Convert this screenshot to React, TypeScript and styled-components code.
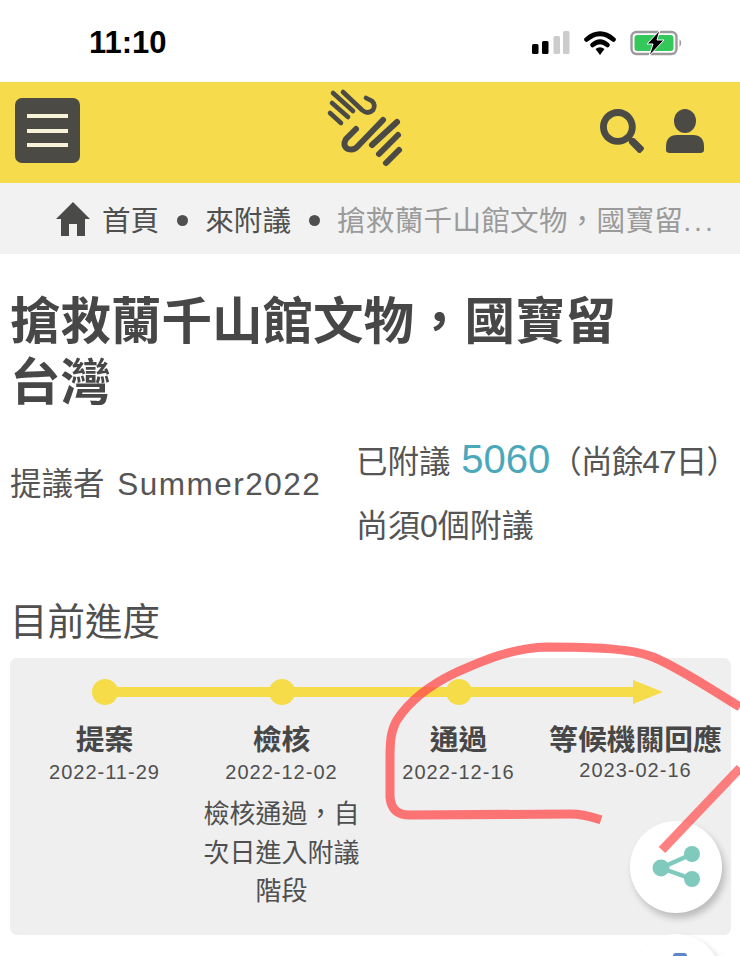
import React from 'react';
import styled, { createGlobalStyle } from 'styled-components';
import { FaSearch } from 'react-icons/fa';

const GlobalStyle = createGlobalStyle`
    html, body {
        margin: 0;
        padding: 0;
        background: #fff;
    }
    body {
        font-family: "Liberation Sans", "Noto Sans CJK TC", sans-serif;
        color: #4a4a48;
    }
`;

const Page = styled.div`
    position: relative;
    width: 740px;
    height: 956px;
    overflow: hidden;
    background: #fff;
`;

const StatusBar = styled.div`
    display: flex;
    align-items: center;
    justify-content: space-between;
    height: 82px;
    padding: 4px 56px 0 89px;
    box-sizing: border-box;
`;

const Clock = styled.span`
    font-family: "Liberation Sans", sans-serif;
    font-size: 31px;
    font-weight: 700;
    color: #000;
`;

const StatusIcons = styled.div`
    display: flex;
    align-items: center;
    gap: 14px;
`;

const Header = styled.header`
    display: flex;
    align-items: center;
    justify-content: space-between;
    box-sizing: border-box;
    height: 101px;
    padding: 0 35px 4px 15px;
    background: #f6dc4c;
`;

const MenuButton = styled.button`
    display: flex;
    flex-direction: column;
    justify-content: center;
    gap: 10.5px;
    width: 65px;
    height: 65px;
    padding: 0 12px;
    border: 0;
    border-radius: 7px;
    background: #4b4a45;
`;

const MenuLine = styled.span`
    display: block;
    height: 4px;
    background: #f8f3d8;
`;

const Logo = styled.svg`
    width: 110px;
    height: 100px;
    margin: 0 0 4px 50px;
`;

const HeaderActions = styled.div`
    display: flex;
    align-items: center;
    gap: 21px;
    color: #4b4a45;
    font-size: 44px;
`;

const Breadcrumb = styled.nav`
    display: flex;
    align-items: center;
    height: 71px;
    padding: 0 0 0 55px;
    background: #f2f2f2;
    font-size: 28.6px;
    white-space: nowrap;
    color: #4f4f4f;
`;

const HomeIcon = styled.svg`
    width: 36px;
    height: 36px;
    margin-right: 11px;
`;

const Dot = styled.span`
    width: 11px;
    height: 11px;
    margin: 3px 17.5px 0;
    border-radius: 50%;
    background: #4f4f4f;
`;

const CurrentCrumb = styled.span`
    letter-spacing: 0.25px;
    color: #9a9a9a;
`;

const CrumbDots = styled.span`
    letter-spacing: 3px;
`;

const Main = styled.main`
    padding: 37px 9px 0 10px;
`;

const Title = styled.h1`
    width: 620px;
    margin: 0;
    font-size: 50.5px;
    line-height: 61px;
    font-weight: 700;
    color: #474747;
`;

const Meta = styled.div`
    display: flex;
    margin: 14px 0 0;
    font-size: 31.5px;
    color: #555;
`;

const Proposer = styled.div`
    flex: none;
    width: 346px;
    margin-top: 31px;
`;

const ProposerName = styled.span`
    margin-left: 4px;
    letter-spacing: 1.5px;
`;

const Signed = styled.div`
    flex: none;
    line-height: 64px;
    white-space: nowrap;
`;

const SignCount = styled.span`
    margin-left: 2px;
    font-size: 40px;
    color: #4ba8bb;
`;

const SignDays = styled.span`
    letter-spacing: -0.8px;
`;

const SignNeed = styled.div`
    font-size: 32px;
`;

const SectionTitle = styled.h2`
    margin: 39px 0 11px;
    font-size: 37.5px;
    line-height: 50px;
    font-weight: 400;
    color: #4f4f4f;
`;

const Panel = styled.section`
    position: relative;
    height: 277px;
    border-radius: 7px;
    background: #efefef;
    padding-left: 6px;
`;

const Steps = styled.ol`
    display: grid;
    grid-template-columns: repeat(4, 177px);
    margin: 0;
    padding: 0;
    list-style: none;
`;

const Step = styled.li`
    position: relative;
    display: flex;
    flex-direction: column;
    align-items: center;
    padding-top: 64px;
    text-align: center;
`;

/* 時間軸的線跟點蓋在每一欄上方 */
const StepDot = styled.span`
    position: absolute;
    left: 76px;
    top: 21px;
    z-index: 1;
    width: 26px;
    height: 26px;
    border-radius: 50%;
    background: #f5dc48;
`;

const StepLine = styled.span`
    position: absolute;
    left: 88px;
    top: 29px;
    width: 177px;
    height: 10px;
    background: #f5dc48;
`;

const StepArrow = styled.span`
    position: absolute;
    left: 88px;
    top: 29px;
    width: 0;
    height: 10px;
    background: #f5dc48;
    &::after {
        content: '';
        position: absolute;
        left: -2px;
        top: -7px;
        border-left: 30px solid #f5dc48;
        border-top: 12px solid transparent;
        border-bottom: 12px solid transparent;
    }
`;

const StepName = styled.div`
    font-size: 28.8px;
    line-height: 36px;
    font-weight: 700;
    white-space: nowrap;
    color: #474747;
`;

const StepDate = styled.div<{ $raised?: boolean }>`
    margin-top: ${(p) => (p.$raised ? '-3px' : '-1px')};
    font-size: 20px;
    line-height: 30px;
    letter-spacing: 1px;
    color: #4f4f4f;
`;

const StepNote = styled.div`
    width: 160px;
    margin-top: 8px;
    font-size: 26px;
    line-height: 38.5px;
    color: #4f4f4f;
`;

const Fab = styled.button<{ $top: number }>`
    position: absolute;
    left: 630px;
    top: ${(p) => p.$top}px;
    display: flex;
    align-items: center;
    justify-content: center;
    box-sizing: border-box;
    width: 92px;
    height: 92px;
    padding: 0;
    border: 0;
    border-radius: 50%;
    background: #fff;
    box-shadow: 3px 5px 7px rgba(0, 0, 0, 0.22);
`;

const SecondFabMark = styled.span`
    position: absolute;
    left: 43px;
    top: 19px;
    width: 14px;
    height: 30px;
    border-radius: 3px;
    background: #5b86c9;
`;

const Scribble = styled.svg`
    position: absolute;
    left: 0;
    top: 0;
    width: 740px;
    height: 956px;
    z-index: 3;
    pointer-events: none;
`;

const steps = [
    { name: '提案', date: '2022-11-29' },
    { name: '檢核', date: '2022-12-02', note: '檢核通過，自次日進入附議階段' },
    { name: '通過', date: '2022-12-16' },
    { name: '等候機關回應', date: '2023-02-16', raised: true },
];

export default function App(): JSX.Element {
    return (
        <Page>
            <GlobalStyle />
            <StatusBar>
                <Clock>11:10</Clock>
                <StatusIcons>
                    <svg width="38" height="24" viewBox="0 0 38 24">
                        <rect x="0" y="13" width="6.5" height="10" rx="1.5" fill="#000" />
                        <rect x="10" y="10" width="6.5" height="13" rx="1.5" fill="#000" />
                        <rect x="21.5" y="5" width="6.5" height="18" rx="1.5" fill="#ccc" />
                        <rect x="31" y="0" width="6.5" height="23" rx="1.5" fill="#ccc" />
                    </svg>
                    <svg width="32" height="24" viewBox="0 0 32 24">
                        <path d="M2.5 8.5 Q16 -3 29.5 8.5" fill="none" stroke="#000" strokeWidth="4.6" strokeLinecap="round" />
                        <path d="M8.5 14 Q16 7.5 23.5 14" fill="none" stroke="#000" strokeWidth="4.6" strokeLinecap="round" />
                        <path d="M11.5 18 Q16 14.5 20.5 18 L16 24 Z" fill="#000" />
                    </svg>
                    <svg width="54" height="26" viewBox="0 0 54 26">
                        <rect x="1.5" y="2" width="45" height="22" rx="5" fill="#fff" stroke="#9b9b9b" strokeWidth="2.4" />
                        <rect x="4.5" y="5" width="39" height="16" rx="3" fill="#34c759" />
                        <path d="M49.5 9 Q53 13 49.5 17 Z" fill="#9b9b9b" />
                        <path d="M30 0 L17 14 H23 L19 26 L34 10 H27 Z" fill="#000" stroke="#fff" strokeWidth="1" />
                    </svg>
                </StatusIcons>
            </StatusBar>

            <Header>
                <MenuButton aria-label="menu">
                    <MenuLine />
                    <MenuLine />
                    <MenuLine />
                </MenuButton>
                <Logo viewBox="0 0 110 100" fill="none" stroke="#4b4a45" strokeLinecap="round" strokeLinejoin="round">
                    <g strokeWidth="4.6">
                        <path d="M23 14 L43 32" />
                        <path d="M33 13 L52 31 Q58 36 63 31 Q66 26 62 22 L56 19" />
                        <path d="M22 24 L38 38" />
                        <path d="M20 34 L31 44" />
                    </g>
                    <g strokeWidth="6">
                        <path d="M46 50 L36 60 Q32 67 38 70 Q44 72 48 67 L73 41" />
                        <path d="M62 66 L87 43" />
                        <path d="M69 75 L88 56" />
                        <path d="M76 84 L89 71" />
                    </g>
                </Logo>
                <HeaderActions>
                    <FaSearch />
                    <svg width="40" height="44" viewBox="0 0 40 44" fill="currentColor">
                        <ellipse cx="20" cy="12" rx="11" ry="12" />
                        <path d="M1 38 Q1 26 12 26 H28 Q39 26 39 38 V41 Q39 44 35 44 H5 Q1 44 1 41 Z" />
                    </svg>
                </HeaderActions>
            </Header>

            <Breadcrumb>
                <HomeIcon viewBox="0 0 36 36" fill="#4a4a48">
                    <path d="M18 1 L35 18 H30 V35 H22 V23 H14 V35 H6 V18 H1 Z" />
                </HomeIcon>
                <span>首頁</span>
                <Dot />
                <span>來附議</span>
                <Dot />
                <CurrentCrumb>
                    搶救蘭千山館文物，國寶留<CrumbDots>...</CrumbDots>
                </CurrentCrumb>
            </Breadcrumb>

            <Main>
                <Title>搶救蘭千山館文物，國寶留台灣</Title>
                <Meta>
                    <Proposer>
                        提議者 <ProposerName>Summer2022</ProposerName>
                    </Proposer>
                    <Signed>
                        <div>
                            已附議 <SignCount>5060</SignCount>
                            <SignDays>（尚餘47日）</SignDays>
                        </div>
                        <SignNeed>尚須0個附議</SignNeed>
                    </Signed>
                </Meta>
                <SectionTitle>目前進度</SectionTitle>
                <Panel>
                    <Steps>
                        {steps.map((step, i) => (
                            <Step key={step.name}>
                                {i < 3 && <StepDot />}
                                {i < 3 ? <StepLine /> : <StepArrow />}
                                <StepName>{step.name}</StepName>
                                <StepDate $raised={step.raised}>{step.date}</StepDate>
                                {step.note && <StepNote>{step.note}</StepNote>}
                            </Step>
                        ))}
                    </Steps>
                </Panel>
            </Main>

            <Fab $top={821} aria-label="share">
                <svg width="50" height="44" viewBox="0 0 50 44" fill="#7fcabd" stroke="#7fcabd">
                    <path d="M10 23 L41 9 M10 23 L41 34" fill="none" strokeWidth="4.4" />
                    <circle cx="10" cy="23" r="8.5" stroke="none" />
                    <circle cx="41" cy="9" r="8" stroke="none" />
                    <circle cx="41" cy="34" r="8" stroke="none" />
                </svg>
            </Fab>
            <Fab $top={934} aria-label="comment">
                <SecondFabMark />
            </Fab>

            <Scribble viewBox="0 0 740 956" fill="none" strokeLinejoin="round">
                <path
                    d="M740 707 C715 692 680 668 653 657 C630 648 590 647 547 647 C510 648 480 662 455 673 C430 685 410 700 397 720 C390 732 390 745 390 760 L390 797 C391 808 396 815 410 815 L570 814 C585 814 592 817 601 820"
                    stroke="#ff4f4f"
                    strokeOpacity="0.78"
                    strokeWidth="9"
                />
                <path d="M662 850 L740 768" stroke="#ff4f4f" strokeOpacity="0.72" strokeWidth="9" />
            </Scribble>
        </Page>
    );
}
